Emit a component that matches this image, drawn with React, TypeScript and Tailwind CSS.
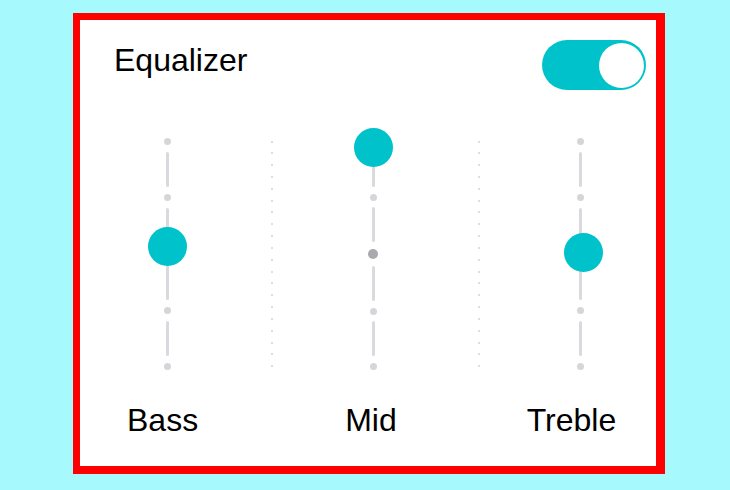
import React from "react";

type Band = {
  label: string;
  // thumb centre measured from the top of the track column
  thumbY: number;
  thumbX?: number;
  markCenter?: boolean;
};

const BANDS: Band[] = [
  { label: "Bass", thumbY: 108 },
  { label: "Mid", thumbY: 9.5, markCenter: true },
  { label: "Treble", thumbY: 114, thumbX: 3 },
];

function Dot({ strong }: { strong?: boolean }) {
  if (strong) {
    return <div className="w-[10px] h-[10px] rounded-full bg-[#a9a9ae] blur-[0.3px]" />;
  }
  return <div className="w-[7px] h-[7px] rounded-full bg-[#d6d6da] blur-[0.3px]" />;
}

function Segment() {
  return <div className="w-[3px] h-[35px] rounded-full bg-[#dadade]" />;
}

function Slider({ band }: { band: Band }) {
  return (
    <div className="relative w-[40px] h-[232px] flex flex-col items-center justify-between">
      <Dot />
      <Segment />
      <Dot />
      <Segment />
      <Dot strong={band.markCenter} />
      <Segment />
      <Dot />
      <Segment />
      <Dot />
      <div
        className="absolute w-[39px] h-[39px] rounded-full bg-[#00c2cb]"
        style={{ top: band.thumbY - 19.5, left: 0.5 + (band.thumbX ?? 0) }}
      />
    </div>
  );
}

function Divider() {
  return (
    <div className="w-[2px] h-[227px] flex flex-col items-center justify-between">
      {Array.from({ length: 20 }).map((_, i) => (
        <div key={i} className="w-[2px] h-[2px] rounded-full bg-[#d3d3d6]" />
      ))}
    </div>
  );
}

function Toggle({ on }: { on: boolean }) {
  return (
    <div
      className={
        on
          ? "w-[104px] h-[50px] rounded-full bg-[#00c2cb] flex items-center justify-end pr-[2px]"
          : "w-[104px] h-[50px] rounded-full bg-[#d4d4d8] flex items-center justify-start pl-[2px]"
      }
    >
      <div className="w-[45px] h-[45px] rounded-full bg-white" />
    </div>
  );
}

export default function App() {
  return (
    <div
      className="w-[730px] h-[490px] bg-[#a6fafd] pt-[13px] pl-[73px]"
      style={{ fontFamily: '"Liberation Sans", Arial, sans-serif' }}
    >
      <div className="w-[592px] h-[461px] bg-white border-solid border-[#ff0000] border-l-[7px] border-t-[7px] border-r-[9px] border-b-[8px] flex flex-col">
        <div className="h-[70px] flex items-start justify-between pt-[20px] pl-[34px] pr-[10px]">
          <span className="mt-[2px] text-[32px] leading-[36px] text-black">Equalizer</span>
          <Toggle on />
        </div>

        <div className="mt-[48px] flex items-center pl-[67px]">
          <Slider band={BANDS[0]} />
          <div className="ml-[84px]">
            <Divider />
          </div>
          <div className="ml-[80px]">
            <Slider band={BANDS[1]} />
          </div>
          <div className="ml-[85px]">
            <Divider />
          </div>
          <div className="ml-[80px]">
            <Slider band={BANDS[2]} />
          </div>
        </div>

        <div className="mt-[32px] flex pl-[47px] text-[32px] leading-[36px] text-black">
          <span>{BANDS[0].label}</span>
          <span className="ml-[147px]">{BANDS[1].label}</span>
          <span className="ml-[130px]">{BANDS[2].label}</span>
        </div>
      </div>
    </div>
  );
}
